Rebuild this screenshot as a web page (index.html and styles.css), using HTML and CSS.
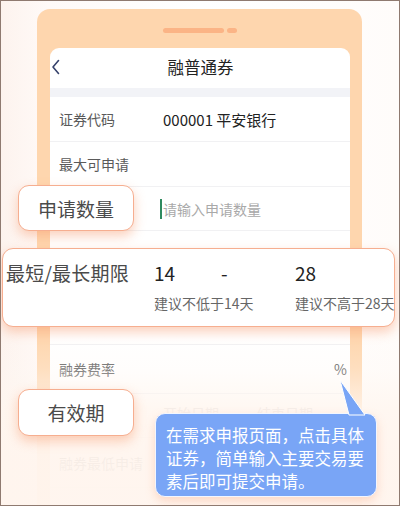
FILE: index.html
```html
<!DOCTYPE html>
<html lang="zh">
<head>
<meta charset="utf-8">
<link rel="stylesheet" href="styles.css">
</head>
<body>
<div class="page">
  <div class="phone">
    <div class="notch"><span class="bar long"></span><span class="bar short"></span></div>
    <div class="screen">
      <div class="nav">
        <svg class="back" width="10" height="16" viewBox="0 0 10 16"><path d="M7.5 1.5 L2 8 L7.5 14.5" fill="none" stroke="#36426c" stroke-width="1.6" stroke-linecap="round" stroke-linejoin="round"/></svg>
        <div class="title">融普通券</div>
        <span></span>
      </div>
      <div class="band"></div>
      <div class="row r45"><span class="label">证券代码</span><span class="value">000001 平安银行</span></div>
      <div class="row r45"><span class="label">最大可申请</span></div>
      <div class="row r44"><span class="label"></span><span class="input"><i class="cursor"></i>请输入申请数量</span></div>
      <div class="row r114"></div>
      <div class="row r49"><span class="label">融券费率</span><span class="unit">%</span></div>
      <div class="row r44 top"><span class="label"></span><span class="faint a">开始日期</span><span class="faint b">结束日期</span></div>
      <div class="row r50"><span class="label">融券最低申请</span></div>
    </div>
  </div>
  <div class="fade"></div>

  <div class="callout c-qty">申请数量</div>
  <div class="callout c-term">
    <span class="t-label">最短/最长期限</span>
    <span class="t-num">14</span>
    <span class="t-num">-</span>
    <span class="t-num">28</span>
    <span></span>
    <span class="t-hint span2">建议不低于14天</span>
    <span class="t-hint">建议不高于28天</span>
  </div>
  <div class="callout c-valid">有效期</div>

  <div class="tip">
    <svg class="tail" width="30" height="40" viewBox="0 0 30 40"><path d="M1 1 L10 36 L26 36 Z" fill="#79a5f6" stroke="#ffffff" stroke-width="1"/></svg>
    <div class="tip-box">在需求申报页面，点击具体证券，简单输入主要交易要素后即可提交申请。</div>
  </div>
</div>
</body>
</html>
```
FILE: styles.css
```css
* { box-sizing: border-box; }
html, body { margin: 0; padding: 0; }
body {
  font-family: "Noto Sans CJK SC", "Noto Sans", sans-serif;
  background: #ffffff;
}
.page {
  position: relative;
  width: 400px;
  height: 506px;
  border: 1px solid #8f7a70;
  overflow: hidden;
  background: linear-gradient(90deg, #fdf3ee 0%, #fffaf8 12%, #ffffff 50%, #fffcfa 100%);
  display: flex;
  flex-direction: column;
}
.phone {
  margin: 8px 0 0 36px;
  width: 325px;
  flex: 1;
  background: #fed6ae;
  border-radius: 13px 13px 0 0;
  padding: 0 12px 0 13px;
  display: flex;
  flex-direction: column;
}
.notch {
  margin-top: 19px;
  height: 5px;
  display: flex;
  justify-content: center;
  gap: 3px;
}
.bar { height: 5px; background: #fbb486; border-radius: 3px; }
.bar.long { width: 61px; }
.bar.short { width: 10px; }
.screen {
  margin-top: 15px;
  flex: 1;
  background: #ffffff;
  border-radius: 9px 9px 0 0;
  display: flex;
  flex-direction: column;
}
.nav {
  height: 40px;
  display: grid;
  grid-template-columns: 40px 1fr 40px;
  align-items: center;
  padding-left: 1px;
}
.back { display: block; margin-top: -2px; }
.title {
  text-align: center;
  font-size: 16.5px;
  color: #222;
  margin-top: -3px;
}
.band { height: 9px; background: #f2f3f7; }
.row {
  display: flex;
  align-items: center;
  padding: 0 2px 0 9px;
  border-bottom: 1px solid #f1f1f3;
  font-size: 14px;
  color: #5a5a5a;
}
.r45 { height: 45px; }
.r44 { height: 44px; }
.r49 { height: 49px; }
.r50 { height: 50px; }
.r114 { height: 114px; }
.row.top { align-items: flex-start; padding-top: 9px; }
.label { width: 104px; flex: none; }
.value { font-size: 15px; color: #222; }
.input { color: #a9a9a9; position: relative; font-size: 14px; }
.cursor {
  position: absolute;
  left: -3px;
  top: 0;
  width: 2px;
  height: 20px;
  background: #2f8a5f;
}
.unit { margin-left: auto; color: #555; font-size: 14px; margin-right: 1px; }
.faint { color: #c9c9c9; }
.faint.a { width: 94px; }
.fade {
  position: absolute;
  left: 0; top: 0; right: 0; bottom: 0;
  background: linear-gradient(180deg,
    rgba(255,248,243,0) 0px,
    rgba(255,248,243,0) 335px,
    rgba(255,248,243,0.25) 368px,
    rgba(255,246,239,0.85) 410px,
    rgba(255,245,238,0.95) 460px,
    rgba(255,245,238,0.96) 506px);
  pointer-events: none;
}
.callout {
  position: absolute;
  background: #ffffff;
  border: 1px solid #f6ae90;
  border-radius: 11px;
  box-shadow: 0 5px 12px rgba(246, 150, 104, 0.45);
  color: #4a4a4a;
  font-size: 19px;
  white-space: nowrap;
}
.c-qty, .c-valid {
  left: 17px;
  width: 116px;
  display: flex;
  align-items: center;
  justify-content: center;
}
.c-qty { top: 184px; height: 46px; }
.c-valid { top: 388px; height: 47px; }
.c-term {
  left: 1px;
  top: 247px;
  width: 393px;
  height: 79px;
  display: grid;
  grid-template-columns: 148px 67px 74px 1fr;
  grid-template-rows: 34px 28px;
  align-items: center;
  padding: 6px 0 0 3px;
}
.t-label { letter-spacing: 0.2px; }
.t-num { font-size: 19px; color: #222; }
.t-hint { font-size: 14px; color: #666; white-space: nowrap; }
.span2 { grid-column: span 2; }
.tip {
  position: absolute;
  left: 154px;
  top: 378px;
  width: 222px;
}
.tail {
  position: absolute;
  left: 184px;
  top: 0;
  z-index: 3;
}
.tip-box {
  position: relative;
  margin-top: 34px;
  background: #79a5f6;
  border: 1px solid #f2f6ff;
  border-radius: 10px;
  box-shadow: 0 4px 10px rgba(246, 160, 120, 0.35);
  color: #ffffff;
  font-size: 16.5px;
  line-height: 23px;
  padding: 10px 6px 8px 10px;
  height: 84px;
}
```
